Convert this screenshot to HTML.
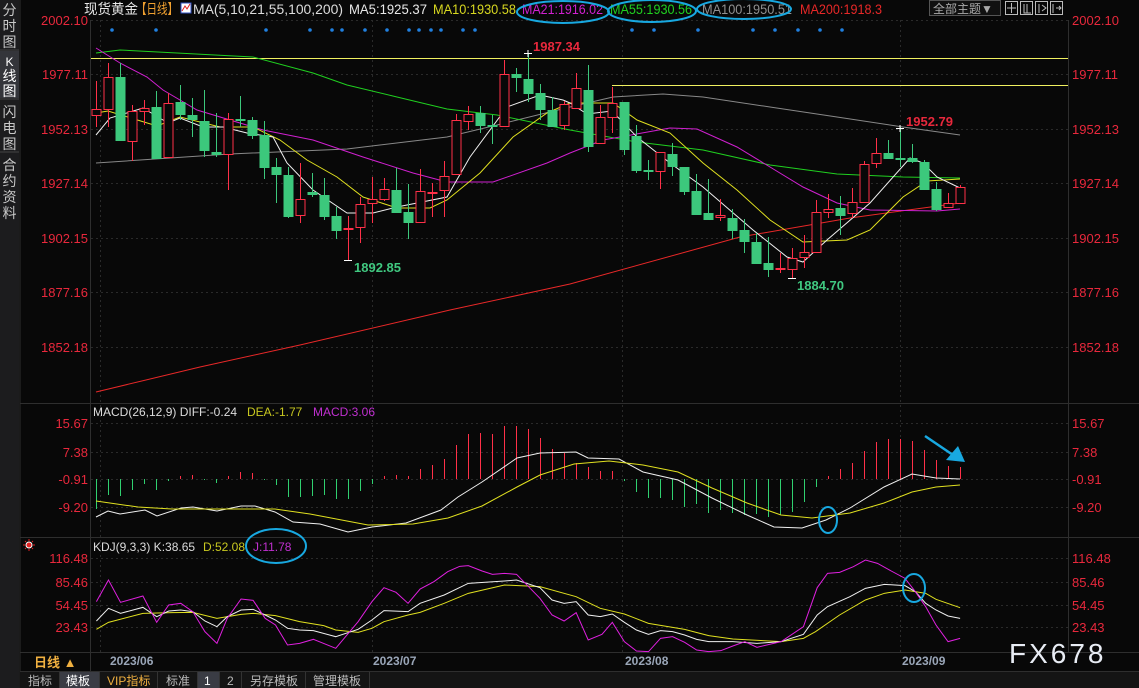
<!DOCTYPE html>
<html><head><meta charset="utf-8">
<style>
html,body{margin:0;padding:0;background:#080808;width:1139px;height:688px;overflow:hidden;font-family:"Liberation Sans","Noto Sans CJK SC",sans-serif}
svg{position:absolute;left:0;top:0}
</style></head><body>
<svg id="s" width="1139" height="688" viewBox="0 0 1139 688" xmlns="http://www.w3.org/2000/svg" font-family="Liberation Sans, Noto Sans CJK SC, sans-serif">
<rect width="1139" height="688" fill="#080808"/>
<rect x="0" y="0" width="19" height="688" fill="#1c1c1e"/>
<rect x="0" y="51" width="19" height="47" fill="#34353a"/>
<g fill="#c8c8c8" font-size="14" text-anchor="middle">
<text x="9.5" y="15">分</text><text x="9.5" y="31">时</text><text x="9.5" y="47">图</text>
<text x="9.5" y="66" fill="#fff" font-size="12">K</text><text x="9.5" y="81" fill="#fff">线</text><text x="9.5" y="96" fill="#fff">图</text>
<text x="9.5" y="117">闪</text><text x="9.5" y="133">电</text><text x="9.5" y="149">图</text>
<text x="9.5" y="170">合</text><text x="9.5" y="186">约</text><text x="9.5" y="202">资</text><text x="9.5" y="218">料</text>
</g>
<line x1="0" y1="50" x2="19" y2="50" stroke="#444"/><line x1="0" y1="99" x2="19" y2="99" stroke="#444"/><line x1="0" y1="152" x2="19" y2="152" stroke="#444"/>
<g stroke="#2e2e2e" stroke-width="1">
<line x1="90.5" y1="20" x2="90.5" y2="671"/>
<line x1="1068.5" y1="20" x2="1068.5" y2="652"/>
<line x1="20" y1="403.5" x2="1139" y2="403.5"/>
<line x1="20" y1="537.5" x2="1139" y2="537.5"/>
<line x1="20" y1="652.5" x2="1139" y2="652.5"/>
<line x1="20" y1="671.5" x2="1139" y2="671.5"/>
<line x1="20" y1="0" x2="20" y2="688"/>
</g>
<g stroke="#2a2a2a" stroke-dasharray="2,3">
<line x1="91" y1="20.5" x2="1068" y2="20.5"/><line x1="91" y1="74.5" x2="1068" y2="74.5"/><line x1="91" y1="129.5" x2="1068" y2="129.5"/><line x1="91" y1="183.5" x2="1068" y2="183.5"/><line x1="91" y1="238.5" x2="1068" y2="238.5"/><line x1="91" y1="292.5" x2="1068" y2="292.5"/><line x1="91" y1="347.5" x2="1068" y2="347.5"/>
<line x1="91" y1="423.5" x2="1068" y2="423.5"/><line x1="91" y1="452.5" x2="1068" y2="452.5"/><line x1="91" y1="479.5" x2="1068" y2="479.5"/><line x1="91" y1="507.5" x2="1068" y2="507.5"/>
<line x1="91" y1="558.5" x2="1068" y2="558.5"/><line x1="91" y1="582.5" x2="1068" y2="582.5"/><line x1="91" y1="605.5" x2="1068" y2="605.5"/><line x1="91" y1="627.5" x2="1068" y2="627.5"/>
<line x1="100.5" y1="20" x2="100.5" y2="652"/><line x1="372.5" y1="20" x2="372.5" y2="652"/><line x1="622.5" y1="20" x2="622.5" y2="652"/><line x1="900.5" y1="20" x2="900.5" y2="652"/>
</g>
<g fill="#e8283c" font-size="13">
<g text-anchor="end">
<text x="88" y="25">2002.10</text><text x="88" y="79">1977.11</text><text x="88" y="134">1952.13</text><text x="88" y="188">1927.14</text><text x="88" y="243">1902.15</text><text x="88" y="297">1877.16</text><text x="88" y="352">1852.18</text>
<text x="88" y="428">15.67</text><text x="88" y="457">7.38</text><text x="88" y="484">-0.91</text><text x="88" y="512">-9.20</text>
<text x="88" y="563">116.48</text><text x="88" y="587">85.46</text><text x="88" y="610">54.45</text><text x="88" y="632">23.43</text>
</g>
<text x="1072" y="25">2002.10</text><text x="1072" y="79">1977.11</text><text x="1072" y="134">1952.13</text><text x="1072" y="188">1927.14</text><text x="1072" y="243">1902.15</text><text x="1072" y="297">1877.16</text><text x="1072" y="352">1852.18</text>
<text x="1072" y="428">15.67</text><text x="1072" y="457">7.38</text><text x="1072" y="484">-0.91</text><text x="1072" y="512">-9.20</text>
<text x="1072" y="563">116.48</text><text x="1072" y="587">85.46</text><text x="1072" y="610">54.45</text><text x="1072" y="632">23.43</text>
</g>
<g font-size="14" lengthAdjust="spacingAndGlyphs">
<text x="84" y="14" fill="#e8e8e8" textLength="54" lengthAdjust="spacingAndGlyphs">现货黄金</text>
<text x="136" y="14" fill="#f0a030" textLength="42" lengthAdjust="spacingAndGlyphs">【日线】</text>
<rect x="181" y="3" width="10" height="10" fill="#fff" stroke="#3050c0"/>
<path d="M182 11 L185 6 L187 9 L190 4" stroke="#e02020" fill="none"/>
<text x="193" y="14" fill="#dcdcdc" textLength="150" lengthAdjust="spacingAndGlyphs">MA(5,10,21,55,100,200)</text>
<text x="349" y="14" fill="#e8e8e8" textLength="78" lengthAdjust="spacingAndGlyphs">MA5:1925.37</text>
<text x="433" y="14" fill="#d8d820" textLength="83" lengthAdjust="spacingAndGlyphs">MA10:1930.58</text>
<text x="522" y="14" fill="#d020d0" textLength="81" lengthAdjust="spacingAndGlyphs">MA21:1916.02</text>
<text x="610" y="14" fill="#20d020" textLength="82" lengthAdjust="spacingAndGlyphs">MA55:1930.56</text>
<text x="702" y="14" fill="#909090" textLength="90" lengthAdjust="spacingAndGlyphs">MA100:1950.51</text>
<text x="800" y="14" fill="#e82828" textLength="82" lengthAdjust="spacingAndGlyphs">MA200:1918.3</text>
</g>
<g fill="none" stroke="#18a8e0" stroke-width="2">
<ellipse cx="563" cy="12" rx="46" ry="11"/><ellipse cx="652" cy="11" rx="44" ry="11"/><ellipse cx="744" cy="9" rx="47" ry="10"/>
</g>
<rect x="929.5" y="0.5" width="71" height="15" fill="#111" stroke="#555"/>
<text x="933" y="13" fill="#aaa" font-size="12">全部主题▼</text>
<g stroke="#bbb" fill="none"><rect x="1005.5" y="1.5" width="12" height="13"/><rect x="1020.5" y="1.5" width="12" height="13"/><rect x="1035.5" y="1.5" width="12" height="13"/><rect x="1050.5" y="1.5" width="12" height="13"/>
<path d="M1011.5 3v10M1007 8h9M1024 4v9h7M1027 4v9M1039 4v9M1042 5l4 3-4 3M1053 4v9M1056 8h5M1059 6l2 2-2 2"/></g>
<g id="dots" fill="#2080e0"></g>
<line x1="91" y1="58.5" x2="1068" y2="58.5" stroke="#f0f060"/>
<line x1="612" y1="85.5" x2="1068" y2="85.5" stroke="#f0f060"/>
<g id="main"></g>
<g font-size="13" font-weight="bold">
<text x="533" y="51" fill="#e8283c">1987.34</text>
<text x="906" y="126" fill="#e8283c">1952.79</text>
<text x="354" y="272" fill="#40c880">1892.85</text>
<text x="797" y="290" fill="#40c880">1884.70</text>
</g>
<g stroke="#fff" stroke-width="1"><path d="M524 53.5h8M528 50v7M344 260.5h8M788 278.5h8M896 128.5h8M900 125v7"/></g>
<g font-size="12"><text x="93" y="416" fill="#dcdcdc">MACD(26,12,9) DIFF:-0.24</text><text x="247" y="416" fill="#c8c820">DEA:-1.77</text><text x="313" y="416" fill="#c030d0">MACD:3.06</text></g>
<g id="macd"></g>
<ellipse cx="828" cy="520" rx="9" ry="13" fill="none" stroke="#18a8e0" stroke-width="2"/>
<line x1="925" y1="436" x2="953" y2="455" stroke="#18a8e0" stroke-width="2.5"/>
<path d="M946 460 L965 462 L958 446 Z" fill="#18a8e0"/>
<g transform="translate(29,545)"><circle r="3" fill="#e02020" stroke="#fff" stroke-width="1"/><g stroke="#e02020"><path d="M0 -6v2M0 4v2M-6 0h2M4 0h2M-4 -4l1 1M3 3l1 1M-4 4l1 -1M3 -3l1 -1"/></g></g>
<g font-size="12"><text x="93" y="551" fill="#dcdcdc">KDJ(9,3,3) K:38.65</text><text x="203" y="551" fill="#c8c820">D:52.08</text><text x="253" y="551" fill="#c030d0">J:11.78</text></g>
<ellipse cx="276" cy="546" rx="30" ry="17" fill="none" stroke="#18a8e0" stroke-width="2"/>
<g id="kdj"></g>
<ellipse cx="914" cy="588" rx="11" ry="14" fill="none" stroke="#18a8e0" stroke-width="2"/>
<rect x="21" y="653" width="69" height="18" fill="#080808"/>
<text x="34" y="667" fill="#f0b040" font-size="13" font-weight="bold">日线 ▲</text>
<g fill="#9aa6b8" font-size="12" font-weight="bold"><text x="110" y="665">2023/06</text><text x="373" y="665">2023/07</text><text x="625" y="665">2023/08</text><text x="902" y="665">2023/09</text></g>
<text x="1009" y="663" fill="#e8ecf4" font-size="28" letter-spacing="3">FX678</text>
<rect x="20" y="672" width="1119" height="16" fill="#141414"/>
<rect x="60" y="672" width="39" height="16" fill="#3a3c44"/>
<rect x="198" y="672" width="21" height="16" fill="#3a3c44"/>
<g font-size="12" fill="#bbb"><text x="28" y="685">指标</text><text x="66" y="685" fill="#fff">模板</text><text x="107" y="685" fill="#f0b040">VIP指标</text><text x="166" y="685">标准</text><text x="204" y="685" fill="#fff">1</text><text x="227" y="685">2</text><text x="250" y="685">另存模板</text><text x="313" y="685">管理模板</text></g>
<g stroke="#333"><path d="M59.5 672v16M99.5 672v16M157.5 672v16M197.5 672v16M219.5 672v16M241.5 672v16M305.5 672v16M369.5 672v16"/></g>
</svg>
<script>
var NS="http://www.w3.org/2000/svg";
function el(p,t,a){var e=document.createElementNS(NS,t);for(var k in a)e.setAttribute(k,a[k]);p.appendChild(e);return e;}
var dots=document.getElementById('dots');
[112,156,266,310,332,342,365,387,409,419,431,441,463,475,632,654,698,753,775,798,820,842].forEach(function(x){el(dots,'circle',{cx:x,cy:30,r:1.8});});
var main=document.getElementById('main');
function line(g,pts,c,w){el(g,'polyline',{points:pts.map(function(p){return p.join(',')}).join(' '),fill:'none',stroke:c,'stroke-width':w||1});}
line(main,[[96,392],[200,367],[300,345],[450,310],[570,284],[740,237],[850,218],[960,203]],'#e82828');
line(main,[[96,163],[230,154],[347,149],[447,137],[497,125],[570,107],[613,97],[663,94],[703,97],[770,107],[837,117],[903,127],[960,135]],'#888');
line(main,[[96,53],[120,50],[177,53],[253,57],[313,73],[347,85],[397,97],[447,109],[497,115],[570,130],[637,142],[703,150],[770,165],[837,174],[903,177],[960,178]],'#20d020');
line(main,[[96,48],[120,63],[147,77],[163,90],[197,110],[230,120],[263,130],[313,140],[363,157],[413,173],[447,182],[493,182],[547,163],[570,153],[603,140],[670,128],[697,129],[737,147],[770,167],[803,187],[837,203],[870,210],[937,211],[960,209]],'#d020d0');
line(main,[[96,113],[108,111],[157,126],[180,117],[220,127],[253,127],[280,140],[307,160],[337,177],[363,197],[397,208],[430,208],[447,200],[480,173],[513,137],[547,113],[570,103],[613,103],[637,120],[670,133],[703,163],[737,190],[770,220],[803,242],[847,240],[870,230],[903,197],[927,181],[960,179]],'#e0e020');
line(main,[[96,135],[110,118],[130,112],[143,108],[168,123],[180,118],[203,127],[223,127],[247,133],[273,137],[287,163],[313,190],[347,213],[373,213],[397,207],[447,197],[470,157],[507,107],[540,95],[563,100],[570,103],[587,114],[612,111],[637,137],[670,163],[703,187],[753,230],[787,257],[803,262],[827,240],[870,203],[910,158],[923,163],[937,177],[960,188]],'#f0f0f0');
var C=[['r',109,115,81,127],['r',77,109,63,127],['g',77,140,63,140],['r',111,141,105,161],['r',108,111,100,125],['g',107,158,91,158],['r',103,157,93,157],['g',102,114,85,120],['g',115,119,98,137],['g',121,150,90,157],['g',152,154,113,157],['r',119,154,113,190],['g',119,120,96,127],['g',120,135,117,139],['g',135,167,121,179],['g',167,174,158,203],['g',175,216,167,218],['r',199,215,163,223],['g',192,194,173,197],['g',195,216,178,220],['g',216,230,207,239],['r',228,229,216,260],['r',204,227,197,243],['r',199,203,177,223],['r',189,199,178,201],['g',190,212,168,212],['g',212,222,184,239],['r',191,222,169,223],['r',192,192,183,217],['r',176,190,161,217],['r',120,174,114,174],['r',114,121,106,130],['g',113,125,106,133],['g',125,125,115,144],['r',74,126,60,126],['g',74,77,68,92],['g',79,93,53,102],['g',93,109,84,120],['g',110,126,97,127],['r',104,125,101,130],['r',88,108,73,108],
['g',90,146,65,152],['r',117,143,105,144],['r',103,117,87,133],['g',102,149,102,155],['g',136,170,125,173],['g',170,170,160,180],['r',152,171,152,189],['g',154,166,143,176],['g',167,191,167,195],['g',191,214,174,214],['g',213,219,179,219],['r',215,217,199,221],['g',218,230,209,239],['g',230,241,219,253],['g',242,263,233,263],['g',263,269,237,277],['r',268,268,253,273],['r',258,269,248,278],['r',252,257,235,268],['r',212,252,200,252],['r',209,212,194,218],['g',208,215,196,235],['r',202,213,188,218],['r',164,202,161,202],['r',153,163,138,168],['g',153,158,140,159],['g',158,158,127,167],['g',158,161,144,163],['g',162,189,160,189],['g',189,209,182,211],['r',203,207,193,208],['r',187,203,185,203]];
C.forEach(function(c,i){var x=96+12*i;var col=c[0]=='r'?'#ff3048':'#3cc87c';
el(main,'line',{x1:x+.5,y1:c[3],x2:x+.5,y2:c[4],stroke:col});
var h=Math.max(c[2]-c[1],1);
if(c[0]=='r')el(main,'rect',{x:x-4,y:c[1]+.5,width:9,height:h,fill:'#080808',stroke:col});
else el(main,'rect',{x:x-4.5,y:c[1],width:10,height:h+1,fill:col});});
var m=document.getElementById('macd');
var H=[509,495,496,490,484,490,481,476,475,480,483,476,472,473,480,485,497,497,496,495,499,499,491,484,476,475,476,469,465,459,445,434,433,434,426,426,429,438,449,453,463,467,471,471,481,492,498,498,500,507,504,513,510,513,515,514,517,515,512,502,487,476,469,463,451,442,439,439,441,450,460,466,467];
H.forEach(function(v,i){var x=96.5+12*i;el(m,'line',{x1:x,y1:479,x2:x,y2:v,stroke:v>479?'#30d070':'#ff3048'});});
line(m,[[96,517],[108,511],[120,514],[145,510],[157,516],[181,508],[193,507],[217,511],[241,506],[255,506],[275,512],[293,522],[320,524],[348,532],[372,527],[406,523],[441,510],[458,497],[482,482],[517,458],[540,453],[576,452],[588,458],[619,459],[643,472],[678,480],[712,498],[747,515],[774,527],[802,528],[826,520],[850,508],[884,487],[912,474],[936,478],[960,479]],'#f0f0f0');
line(m,[[96,501],[138,507],[172,509],[275,509],[310,514],[368,525],[413,524],[448,518],[482,506],[517,487],[540,475],[574,464],[609,461],[643,465],[678,472],[712,488],[747,503],[781,515],[812,518],[850,513],[884,503],[912,492],[936,487],[960,485]],'#e0e020');
var k=document.getElementById('kdj');
function cv(a,off){return a.map(function(p){return [off+p[0]/2.904,535+p[1]/3];});}
var J1=[[280,200],[315,135],[350,202],[415,183],[455,262],[490,210],[525,205],[560,230],[595,290],[630,325],[660,250],[700,192],[735,196],[770,250],[800,270],[835,330],[870,325],[910,313],[975,340],[1040,260],[1080,200],[1115,158],[1150,172],[1185,205],[1220,162],[1260,140],[1300,110],[1335,94],[1360,92],[1400,108],[1430,118],[1465,115],[1500,118],[1568,190]];
var J2=[[35,240],[70,258],[105,233],[140,315],[180,298],[210,262],[245,320],[280,348],[315,350],[350,310],[385,305],[420,322],[455,345],[490,350],[525,347],[560,333],[595,320],[630,337],[700,320],[765,275],[805,158],[835,115],[870,112],[910,95],[945,75],[980,85],[1020,108],[1060,130],[1090,170],[1120,215],[1150,270],[1185,320],[1220,310]];
var K1=[[280,258],[315,220],[350,235],[415,217],[455,245],[490,228],[525,225],[560,230],[595,258],[630,275],[660,245],[700,225],[735,223],[770,240],[800,255],[835,280],[870,285],[910,287],[975,305],[1040,283],[1080,255],[1115,227],[1185,230],[1220,205],[1290,180],[1360,145],[1465,138],[1500,135],[1568,158]];
var K2=[[35,195],[70,205],[105,200],[140,240],[175,245],[210,237],[245,262],[280,285],[315,298],[350,287],[385,290],[420,300],[455,313],[490,320],[560,320],[630,325],[700,320],[765,298],[805,240],[835,215],[900,185],[945,160],[1000,148],[1060,152],[1090,170],[1120,205],[1150,225],[1185,243],[1220,250]];
var D1=[[280,283],[315,262],[415,235],[500,233],[560,232],[630,250],[700,238],[735,235],[800,242],[870,260],[940,272],[975,285],[1040,292],[1080,280],[1115,260],[1185,240],[1220,232],[1290,205],[1360,175],[1465,150],[1568,155]];
var D2=[[105,185],[175,220],[245,237],[315,265],[420,283],[490,302],[560,312],[700,320],[765,310],[800,290],[870,240],[945,195],[1000,175],[1060,165],[1120,175],[1150,193],[1220,218]];
line(k,cv(D1,0).concat(cv(D2,540)),'#e0e020');
line(k,cv(K1,0).concat(cv(K2,540)),'#f0f0f0');
line(k,cv(J1,0).concat(cv(J2,540)),'#e020e0');
</script>
</body></html>
